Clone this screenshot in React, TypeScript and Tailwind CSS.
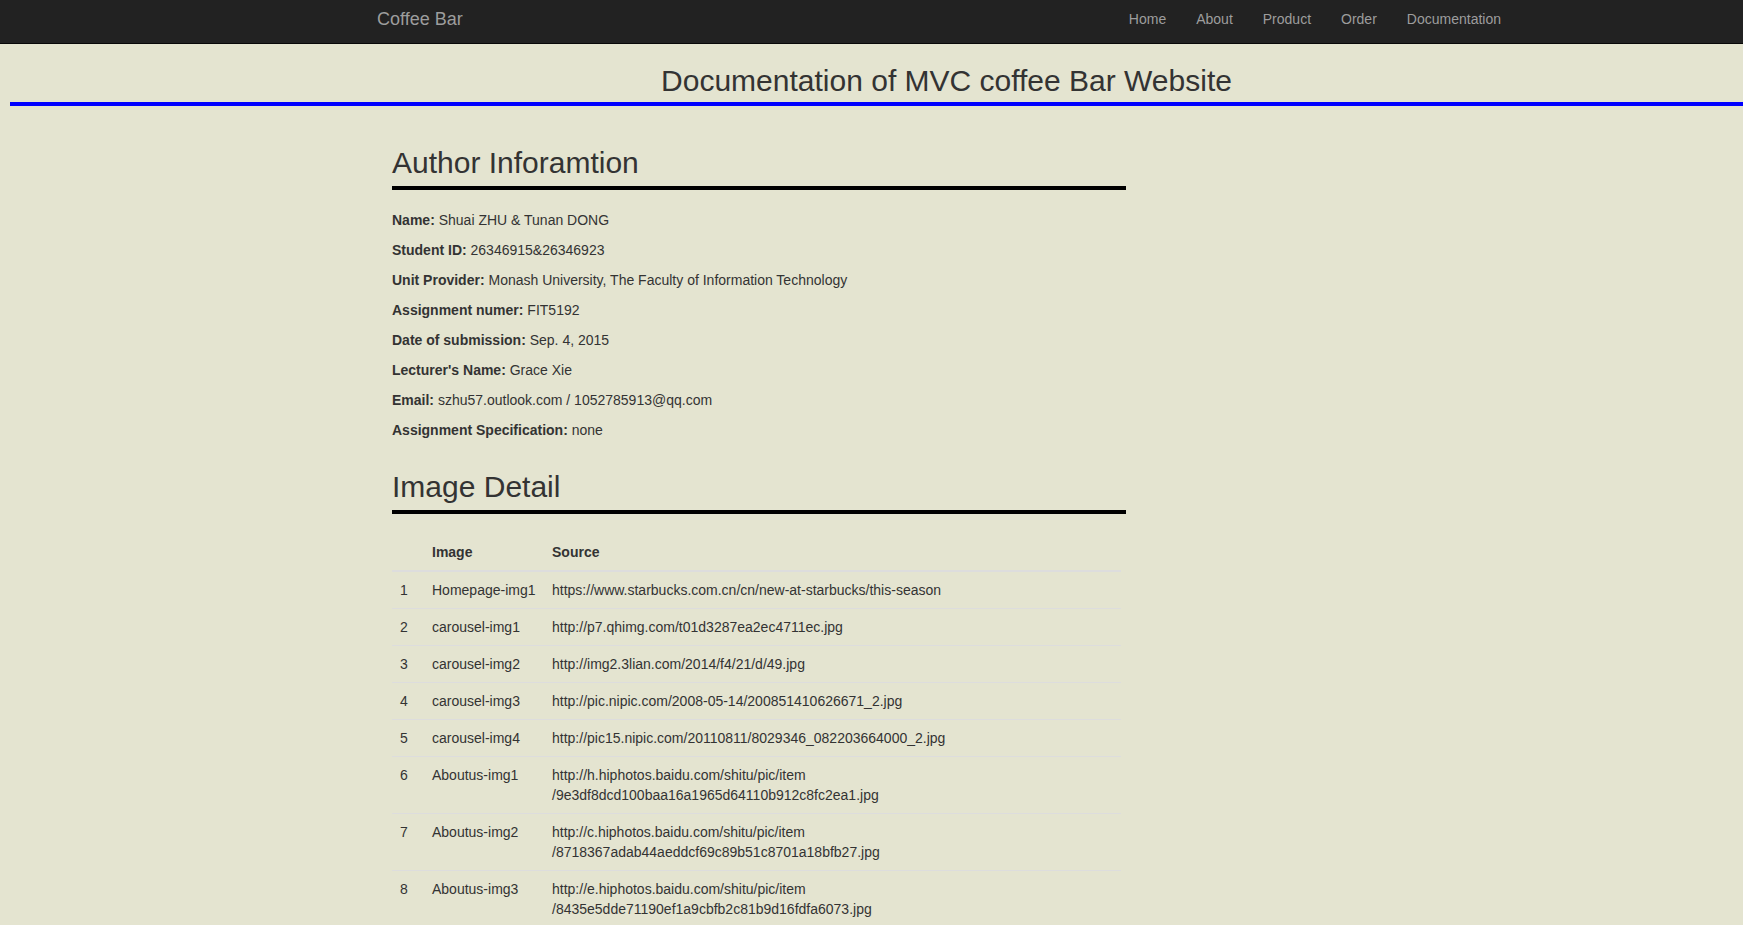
import React from 'react';

const navLinks = ['Home', 'About', 'Product', 'Order', 'Documentation'];

const authorInfo = [
    { label: 'Name:', value: 'Shuai ZHU & Tunan DONG' },
    { label: 'Student ID:', value: '26346915&26346923' },
    { label: 'Unit Provider:', value: 'Monash University, The Faculty of Information Technology' },
    { label: 'Assignment numer:', value: 'FIT5192' },
    { label: 'Date of submission:', value: 'Sep. 4, 2015' },
    { label: "Lecturer's Name:", value: 'Grace Xie' },
    { label: 'Email:', value: 'szhu57.outlook.com / 1052785913@qq.com' },
    { label: 'Assignment Specification:', value: 'none' },
];

const images = [
    { name: 'Homepage-img1', src: ['https://www.starbucks.com.cn/cn/new-at-starbucks/this-season'] },
    { name: 'carousel-img1', src: ['http://p7.qhimg.com/t01d3287ea2ec4711ec.jpg'] },
    { name: 'carousel-img2', src: ['http://img2.3lian.com/2014/f4/21/d/49.jpg'] },
    { name: 'carousel-img3', src: ['http://pic.nipic.com/2008-05-14/200851410626671_2.jpg'] },
    { name: 'carousel-img4', src: ['http://pic15.nipic.com/20110811/8029346_082203664000_2.jpg'] },
    { name: 'Aboutus-img1', src: ['http://h.hiphotos.baidu.com/shitu/pic/item', '/9e3df8dcd100baa16a1965d64110b912c8fc2ea1.jpg'] },
    { name: 'Aboutus-img2', src: ['http://c.hiphotos.baidu.com/shitu/pic/item', '/8718367adab44aeddcf69c89b51c8701a18bfb27.jpg'] },
    { name: 'Aboutus-img3', src: ['http://e.hiphotos.baidu.com/shitu/pic/item', '/8435e5dde71190ef1a9cbfb2c81b9d16fdfa6073.jpg'] },
];

const App: React.FC = () => {
    return (
        <div
            className="min-h-screen bg-[#e4e4d0] text-[#333] text-[14px] leading-[20px]"
            style={{ fontFamily: '"Liberation Sans", Arial, sans-serif' }}
        >
            {/* Navbar */}
            <nav className="h-[44px] bg-[#222] border-b border-[#080808] flex items-center justify-between pl-[377px] pr-[227px] pb-[5px]">
                <a className="text-[18px] leading-[20px] text-[#9d9d9d]">Coffee Bar</a>
                <ul className="flex">
                    {navLinks.map((link) => (
                        <li key={link}>
                            <a className="px-[15px] text-[14px] leading-[20px] text-[#9d9d9d]">{link}</a>
                        </li>
                    ))}
                </ul>
            </nav>

            {/* Page title */}
            <div className="pt-[20px]">
                <h1 className="text-[30px] leading-[33px] text-center pl-[150px] text-[#333]">
                    Documentation of MVC coffee Bar Website
                </h1>
                <div className="ml-[10px] mt-[5px] h-[4px] bg-[#0000ff]" />
            </div>

            <div className="ml-[392px] w-[734px] pb-[20px]">
                <h2 className="mt-[40px] text-[30px] leading-[33px] pb-[7px] border-b-4 border-black">
                    Author Inforamtion
                </h2>
                <div className="mt-[20px]">
                    {authorInfo.map((row) => (
                        <p key={row.label} className="mb-[10px]">
                            <strong className="font-bold">{row.label}</strong> {row.value}
                        </p>
                    ))}
                </div>

                <h2 className="mt-[30px] text-[30px] leading-[33px] pb-[7px] border-b-4 border-black">
                    Image Detail
                </h2>
                <table className="mt-[20px] w-[729px] table-fixed border-collapse">
                    <thead>
                        <tr>
                            <th className="w-[32px] p-[8px] border-b-2 border-[#ddd]"></th>
                            <th className="w-[120px] p-[8px] text-left font-bold border-b-2 border-[#ddd]">Image</th>
                            <th className="p-[8px] text-left font-bold border-b-2 border-[#ddd]">Source</th>
                        </tr>
                    </thead>
                    <tbody>
                        {images.map((img, i) => (
                            <tr key={img.name} className="border-b border-[#ddd] align-top">
                                <td className="p-[8px]">{i + 1}</td>
                                <td className="p-[8px]">{img.name}</td>
                                <td className="p-[8px]">
                                    {img.src.map((line, j) => (
                                        <React.Fragment key={j}>
                                            {j > 0 && <br />}
                                            {line}
                                        </React.Fragment>
                                    ))}
                                </td>
                            </tr>
                        ))}
                    </tbody>
                </table>
            </div>
        </div>
    );
};

export default App;
